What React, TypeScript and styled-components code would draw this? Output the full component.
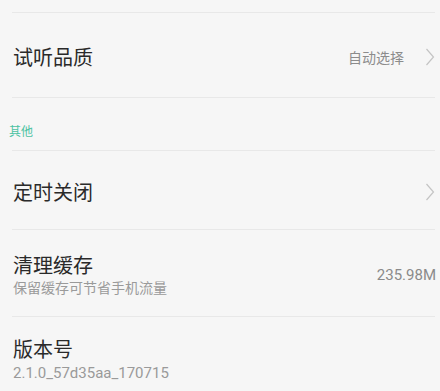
import { createGlobalStyle, styled } from "styled-components";

const GlobalStyle = createGlobalStyle`
  html, body {
    margin: 0;
    padding: 0;
    background: #f6f6f6;
  }
  body {
    font-family: "Noto Sans CJK SC", "Noto Sans", Roboto, sans-serif;
    -webkit-font-smoothing: antialiased;
  }
`;

const Page = styled.div`
  width: 440px;
  height: 391px;
  overflow: hidden;
  background: #f6f6f6;
  padding-top: 12px;
  box-sizing: border-box;
`;

const Row = styled.div<{ $height: number; $shift?: number }>`
  height: ${(p) => p.$height}px;
  margin: 0 5px 0 12px;
  padding-top: ${(p) => p.$shift ?? 4}px;
  border-top: 1px solid #e8e8e8;
  display: flex;
  align-items: center;
  justify-content: space-between;
  box-sizing: border-box;
`;

const TextBlock = styled.div`
  display: flex;
  flex-direction: column;
  padding-left: 1px;
`;

const Title = styled.div`
  font-size: 20px;
  line-height: 24px;
  color: #2a2a2a;
`;

const Subtitle = styled.div<{ $latin?: boolean }>`
  font-size: ${(p) => (p.$latin ? 15 : 14)}px;
  font-family: ${(p) =>
    p.$latin ? 'Roboto, "Noto Sans", sans-serif' : "inherit"};
  line-height: 20px;
  color: #9a9a9a;
  margin-top: ${(p) => (p.$latin ? 2 : 0)}px;
`;

const Right = styled.div`
  display: flex;
  align-items: center;
  gap: 21px;
  color: #8c8c8c;
  font-size: 14px;
`;

const Size = styled.span`
  font-family: Roboto, "Noto Sans", sans-serif;
  font-size: 15px;
  color: #8a8a8a;
  margin-right: -1px;
`;

const SectionHeader = styled.div`
  height: 53px;
  margin: 0 5px 0 12px;
  border-top: 1px solid #e8e8e8;
  box-sizing: border-box;
  display: flex;
  align-items: flex-end;
  padding-bottom: 11px;
`;

const SectionLabel = styled.span`
  margin-left: -3px;
  color: #4cc2a2;
  font-size: 12px;
  line-height: 16px;
`;

const Chevron = () => (
  <svg width="10" height="18" viewBox="0 0 10 18" fill="none">
    <polyline
      points="1.5,1 8.5,9 1.5,17"
      stroke="#c4c4c4"
      strokeWidth="1.2"
      strokeLinejoin="miter"
    />
  </svg>
);

export default function App() {
  return (
    <Page>
      <GlobalStyle />
      <Row $height={85}>
        <TextBlock>
          <Title>试听品质</Title>
        </TextBlock>
        <Right>
          <span>自动选择</span>
          <Chevron />
        </Right>
      </Row>
      <SectionHeader>
        <SectionLabel>其他</SectionLabel>
      </SectionHeader>
      <Row $height={79}>
        <TextBlock>
          <Title>定时关闭</Title>
        </TextBlock>
        <Right>
          <Chevron />
        </Right>
      </Row>
      <Row $height={87}>
        <TextBlock>
          <Title>清理缓存</Title>
          <Subtitle>保留缓存可节省手机流量</Subtitle>
        </TextBlock>
        <Right>
          <Size>235.98M</Size>
        </Right>
      </Row>
      <Row $height={86} $shift={0}>
        <TextBlock>
          <Title>版本号</Title>
          <Subtitle $latin>2.1.0_57d35aa_170715</Subtitle>
        </TextBlock>
      </Row>
    </Page>
  );
}
